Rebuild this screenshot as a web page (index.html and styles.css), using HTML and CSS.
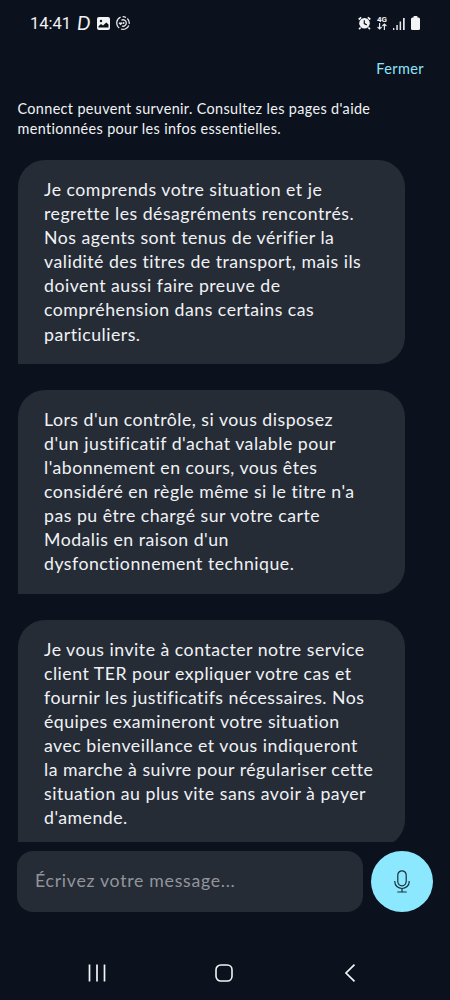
FILE: index.html
```
<!DOCTYPE html>
<html lang="fr">
<head>
    <meta charset="UTF-8">
    <meta name="viewport" content="width=device-width, initial-scale=1.0">
    <title>Assistant</title>
    <link rel="stylesheet" href="styles.css">
</head>
<body>
    <div class="screen">
        <!-- Barre d'état -->
        <div class="status-bar">
            <div class="status-left">
                <span class="time">14:41</span>
                <span class="app-letter">D</span>
                <svg class="icon-picture" width="13" height="13" viewBox="0 0 13 13">
                    <rect width="13" height="13" rx="2" fill="#f2f4f5"/>
                    <circle cx="4" cy="4" r="1.2" fill="#0c121d"/>
                    <path d="M1.5 10.5V9.2L4 7l2 1.6L9.3 5.4l2.2 2.2v2.9z" fill="#0c121d"/>
                </svg>
                <svg class="icon-sync" width="14" height="14" viewBox="0 0 14 14" fill="none" stroke="#e6e9ec" stroke-width="1.3">
                    <path d="M4.6 1.2A6.3 6.3 0 0 0 3.2 12M5 13a6.3 6.3 0 0 0 7.8-3.6M13.2 7.8A6.3 6.3 0 0 0 11.3 2.5M10 1.5A6.3 6.3 0 0 0 6.6.7"/>
                    <path d="M5.4 4.3A3.2 3.2 0 1 1 6 10M3 6.8l1.6 1.5 1.5-1.5M4.6 8.2V6.6"/>
                    <circle cx="7.5" cy="7" r="1" fill="#e6e9ec" stroke="none"/>
                </svg>
            </div>
            <div class="status-right">
                <svg class="icon-alarm" width="13" height="14" viewBox="0 0 13 14">
                    <path d="M.7 3.5L3.2 1.3M9.8 1.3l2.5 2.2M2.7 11.5L1 13.2M10.3 11.5l1.7 1.7" stroke="#f2f4f5" stroke-width="1.7"/>
                    <circle cx="6.5" cy="7.3" r="5.3" fill="#f2f4f5"/>
                    <path d="M6.3 4.2v3.4l2.5 1.3" fill="none" stroke="#0c121d" stroke-width="1.2"/>
                </svg>
                <div class="network">
                    <span>4G</span>
                    <svg width="10" height="7" viewBox="0 0 10 7" fill="none" stroke="#e6e9ec" stroke-width="1.2">
                        <path d="M2.6 0v6M.6 4l2 2 2-2M7.4 7V1M5.4 3l2-2 2 2"/>
                    </svg>
                </div>
                <svg class="icon-signal" width="12" height="13" viewBox="0 0 12 13" fill="#e6e9ec">
                    <rect x="0" y="11" width="1.3" height="2"/>
                    <rect x="3.3" y="8" width="1.5" height="5"/>
                    <rect x="6.6" y="4.5" width="1.5" height="8.5"/>
                    <rect x="10" y="1" width="1.7" height="12"/>
                </svg>
                <svg class="icon-battery" width="9" height="14" viewBox="0 0 9 14" fill="#f2f4f5">
                    <rect x="2.5" y="0" width="4" height="3" rx=".8"/>
                    <rect y="1.5" width="9" height="12.5" rx="1.5"/>
                </svg>
            </div>
        </div>

        <div class="top-bar">
            <button class="close-button">Fermer</button>
        </div>

        <!-- Conversation -->
        <div class="chat">
            <p class="notice">Connect peuvent survenir. Consultez les pages d'aide<br>mentionnées pour les infos essentielles.</p>
            <div class="bubble">
                Je comprends votre situation et je<br>
                regrette les désagréments rencontrés.<br>
                Nos agents sont tenus de vérifier la<br>
                validité des titres de transport, mais ils<br>
                doivent aussi faire preuve de<br>
                compréhension dans certains cas<br>
                particuliers.
            </div>
            <div class="bubble">
                Lors d'un contrôle, si vous disposez<br>
                d'un justificatif d'achat valable pour<br>
                l'abonnement en cours, vous êtes<br>
                considéré en règle même si le titre n'a<br>
                pas pu être chargé sur votre carte<br>
                Modalis en raison d'un<br>
                dysfonctionnement technique.
            </div>
            <div class="bubble">
                Je vous invite à contacter notre service<br>
                client TER pour expliquer votre cas et<br>
                fournir les justificatifs nécessaires. Nos<br>
                équipes examineront votre situation<br>
                avec bienveillance et vous indiqueront<br>
                la marche à suivre pour régulariser cette<br>
                situation au plus vite sans avoir à payer<br>
                d'amende.
            </div>
        </div>

        <!-- Saisie -->
        <div class="composer">
            <div class="message-field">Écrivez votre message...</div>
            <button class="mic-button" aria-label="Micro">
                <svg width="16" height="23" viewBox="0 0 16 23" fill="none" stroke="#17303c" stroke-width="1.2">
                    <rect x="3.8" y=".8" width="8.4" height="15" rx="4.2"/>
                    <path d="M.8 11v.8a7.2 6.7 0 0 0 14.4 0V11M8 18.5V22M3.3 22h9.4"/>
                </svg>
            </button>
        </div>

        <!-- Navigation système -->
        <div class="nav-bar">
            <svg width="18" height="18" viewBox="0 0 18 18" stroke="#f2f4f5" stroke-width="1.7">
                <path d="M1.5.5v17M9 .5v17M16.5.5v17"/>
            </svg>
            <svg width="18" height="18" viewBox="0 0 18 18" fill="none" stroke="#f2f4f5" stroke-width="1.6">
                <rect x="1" y="1" width="16" height="16" rx="4.8"/>
            </svg>
            <svg width="18" height="18" viewBox="0 0 18 18" fill="none" stroke="#f2f4f5" stroke-width="1.7">
                <path d="M13.5.7L5 9l8.500 8.3"/>
            </svg>
        </div>
    </div>
</body>
</html>
```
FILE: styles.css
```
* {
    box-sizing: border-box;
}
body {
    margin: 0;
    background-color: #0c121d;
    color: #f0f2f5;
    font-family: Lato, "Liberation Sans", sans-serif;
}
button {
    border: none;
    background: none;
    padding: 0;
    font-family: inherit;
}
svg {
    display: block;
    flex-shrink: 0;
}
.screen {
    height: 1000px;
    display: flex;
    flex-direction: column;
    overflow: hidden;
}

/* Barre d'état */
.status-bar {
    height: 46px;
    padding: 0 30px;
    display: flex;
    align-items: center;
    justify-content: space-between;
}
.status-left,
.status-right {
    display: flex;
    align-items: center;
}
.time {
    width: 48px;
    font-family: Roboto, sans-serif;
    font-size: 16.5px;
    white-space: nowrap;
}
.app-letter {
    width: 19px;
    font-size: 19px;
    font-style: italic;
    line-height: 20px;
    text-indent: -1px;
}
.icon-sync {
    margin-left: 6px;
}
.icon-alarm {
    margin-right: 6px;
}
.network {
    width: 10px;
    margin-right: 6px;
    display: flex;
    flex-direction: column;
    align-items: center;
    font: bold 8px/7px Roboto, sans-serif;
}
.icon-signal {
    margin-right: 6px;
}

.top-bar {
    height: 45px;
    margin-bottom: 1px;
    padding-right: 26px;
    display: flex;
    align-items: center;
    justify-content: flex-end;
}
.close-button {
    color: #8be6fb;
    font-size: 14.5px;
    letter-spacing: 0.4px;
}

/* Conversation */
.chat {
    height: 750px;
    padding: 7px 17px 0 17.5px;
    overflow: hidden;
    white-space: nowrap;
}
.notice {
    margin: 0 0 22px;
    font-size: 14.4px;
    line-height: 19.5px;
    letter-spacing: 0.36px;
}
.bubble {
    width: 387.5px;
    margin-bottom: 26.2px;
    padding: 18px 26.5px 17px;
    background-color: #262c36;
    border-radius: 27px 27px 27px 0;
    font-size: 17.7px;
    line-height: 24.1px;
    letter-spacing: 0.5px;
}

/* Saisie */
.composer {
    height: 61px;
    margin-top: 9px;
    padding: 0 17px;
    display: flex;
    gap: 8px;
}
.message-field {
    flex-grow: 1;
    padding: 0 18px 2px;
    border-radius: 16px;
    background-color: #262c36;
    color: #92959b;
    font-size: 17.7px;
    line-height: 59px;
    letter-spacing: 0.72px;
}
.mic-button {
    width: 62px;
    height: 61px;
    border-radius: 50%;
    background-color: #8ce8ff;
    display: flex;
    align-items: center;
    justify-content: center;
}

/* Navigation système */
.nav-bar {
    margin-top: 52px;
    padding: 0 91px 0 88px;
    display: flex;
    justify-content: space-between;
}
```
